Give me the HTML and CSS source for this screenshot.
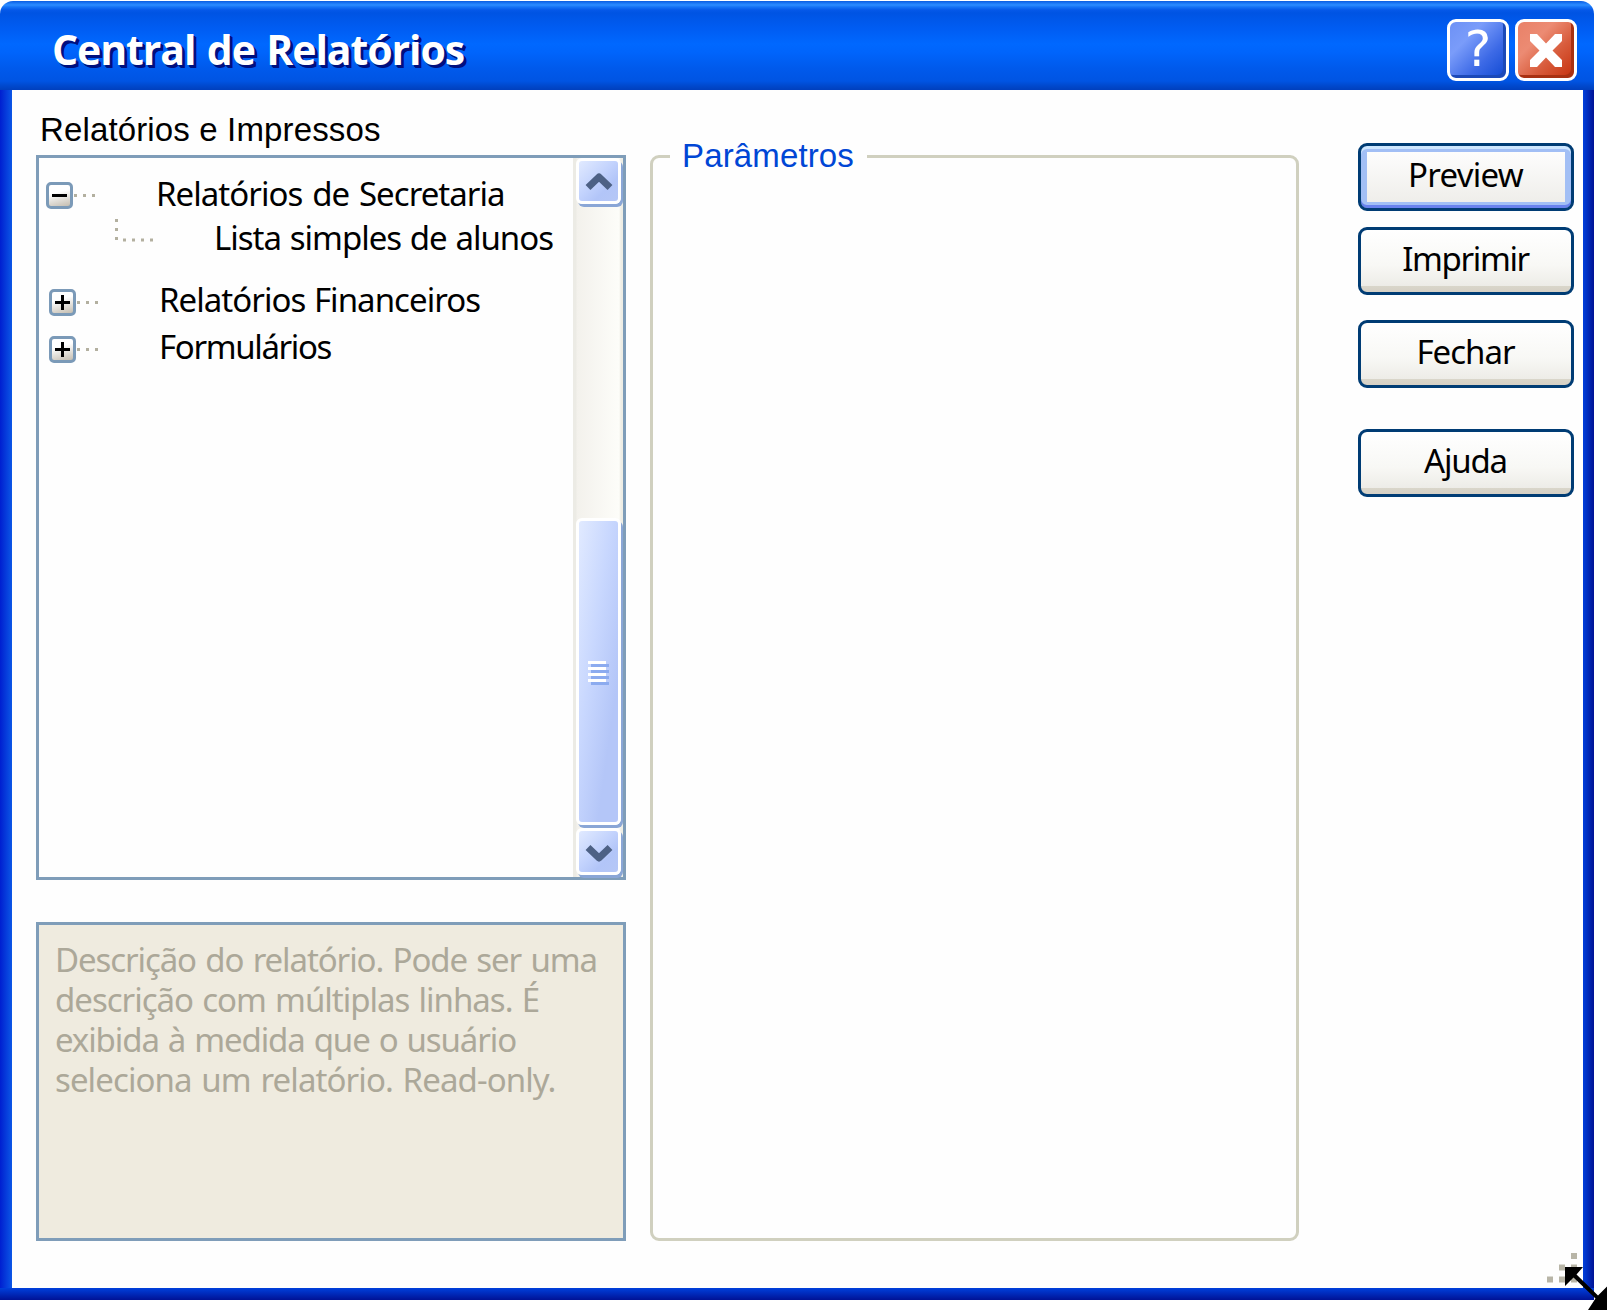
FILE: index.html
```html
<!DOCTYPE html>
<html lang="pt-BR">
<head>
<meta charset="utf-8">
<title>Central de Relatórios</title>
<link rel="stylesheet" href="styles.css">
</head>
<body>
<div class="window">
  <header class="titlebar">
    <h1 class="title">Central de Relatórios</h1>
    <button class="caption help" aria-label="Ajuda">?</button>
    <button class="caption close" aria-label="Fechar">
      <svg width="34" height="35" viewBox="0 0 34 35"><path d="M1 1H8L17 10.500L26 1H33V8L23.500 17.500L33 27V34H26L17 24.500L8 34H1V27L10.500 17.500L1 8Z" fill="#fff"/></svg>
    </button>
  </header>
  <main class="client">
    <section class="left">
      <div class="label"><span class="t-label">Relatórios e Impressos</span></div>
      <div class="treebox">
        <div class="tree">
          <div class="row first"><i class="toggle minus"></i><i class="dots"></i><span class="t1">Relatórios de Secretaria</span></div>
          <div class="row child"><svg class="elbow" width="38" height="23" viewBox="0 0 38 23" fill="#b3b0a0"><path d="M0 0h3v3h-3zM0 9h3v3h-3zM0 18h3v3h-3zM8 19.500h3v3h-3zM17 19.500h3v3h-3zM26 19.500h3v3h-3zM35 19.500h3v3h-3z"/></svg><span class="t2">Lista simples de alunos</span></div>
          <div class="row third"><i class="toggle plus"></i><i class="dots"></i><span class="t3">Relatórios Financeiros</span></div>
          <div class="row fourth"><i class="toggle plus"></i><i class="dots"></i><span class="t4">Formulários</span></div>
        </div>
        <div class="scrollbar">
          <div class="sb up"><svg width="28" height="19" viewBox="0 0 28 19"><path d="M3 15.500L14 5L25 15.500" fill="none" stroke="#4d6185" stroke-width="7" stroke-linejoin="round"/></svg></div>
          <div class="sb thumb"><svg width="21" height="24" viewBox="0 0 21 24"><path d="M0 1.500H18M0 7.500H18M0 13.500H18M0 19.500H18" stroke="#fff" stroke-width="3"/><path d="M3 4.500H21M3 10.500H21M3 16.500H21M3 22.500H21" stroke="#8cabef" stroke-width="3"/></svg></div>
          <div class="sb down"><svg width="28" height="19" viewBox="0 0 28 19"><path d="M3 3.500L14 14L25 3.500" fill="none" stroke="#4d6185" stroke-width="7" stroke-linejoin="round"/></svg></div>
        </div>
      </div>
      <div class="description">
        <span class="d1">Descrição do relatório. Pode ser uma</span><br>
        <span class="d2">descrição com múltiplas linhas. É</span><br>
        <span class="d3">exibida à medida que o usuário</span><br>
        <span class="d4">seleciona um relatório. Read-only.</span>
      </div>
    </section>
    <fieldset class="group"><legend><span class="t-legend">Parâmetros</span></legend></fieldset>
    <nav class="actions">
      <button class="btn default"><span class="b1">Preview</span></button>
      <button class="btn"><span class="b2">Imprimir</span></button>
      <button class="btn close-btn"><span class="b3">Fechar</span></button>
      <button class="btn help-btn"><span class="b4">Ajuda</span></button>
    </nav>
  </main>
</div>
<svg class="grip" width="60" height="57" viewBox="0 0 60 57">
  <path d="M24 0h6v6h-6zM12 11.500h6v6h-6zM24 11.500h6v6h-6zM0 23.500h6v6h-6zM12 23.500h6v6h-6zM24 23.500h6v6h-6z" fill="#b8b5a7"/>
  <path d="M18 14H36L29.500 21.500L51 42.500L60 33.500V57H41L48.500 45.500L26.500 24.500L18 33Z" fill="#000"/>
</svg>
</body>
</html>
```
FILE: styles.css
```css
* { box-sizing: border-box; }
html, body { margin: 0; width: 1607px; height: 1310px; overflow: hidden; background: #fff; }
body { position: relative; padding-top: 1px; font: 33px/40px "Noto Sans", "Open Sans", sans-serif; color: #000; }
span { white-space: nowrap; }
button { font: inherit; color: inherit; padding: 0; }

.window { width: 1594px; height: 1299px; display: flex; flex-direction: column; }
.titlebar {
  flex: none; height: 89px; display: flex; align-items: flex-start; gap: 6px; padding: 18px 17px 0 52px;
  border-radius: 13px 13px 0 0;
  background: linear-gradient(#0a5ce0 0, #1b76f4 2px, #2c8cff 4px, #1673f5 6px, #0558e8 9px, #0054e3 12px, #005cf2 27px, #0068ff 43px, #0064fb 52px, #005aec 67px, #0054e3 80px, #0048cc 85px, #003fbd 89px);
}
.title { margin: 0; flex: 1; color: #fff; font: 700 41px/61px "Open Sans", "Noto Sans", sans-serif; letter-spacing: -1.1px; word-spacing: 2px; text-shadow: 2px 2px 0 #00107f, 3px 3px 0 #00107f; white-space: nowrap; }
.caption { width: 62px; height: 62px; border: 3px solid #fff; border-radius: 9px; display: flex; align-items: center; justify-content: center; color: #fff; }
.help { background: linear-gradient(135deg, #6d91f5 0, #7a9cfa 30%, #3d6ae6 65%, #0f48d2 100%); box-shadow: inset -3px -3px 0 #1c49b8; font: 50px/50px "DejaVu Sans", sans-serif; padding-bottom: 2px; }
.close { background: linear-gradient(135deg, #e98168 0, #ec8b73 32%, #d85c3c 62%, #c52f0b 100%); box-shadow: inset -3px -3px 0 #a83112; }

.client {
  flex: 1; min-height: 0; display: grid; grid-template-columns: 590px 649px 216px; column-gap: 24px;
  border-style: solid; border-width: 0 11px 12px 12px; border-color: transparent;
  padding: 0 0 0 24px;
  background:
    linear-gradient(#fefefe, #fefefe) padding-box,
    linear-gradient(#0040dc, #001295) 0 100% / 100% 12px no-repeat border-box,
    linear-gradient(90deg, #001fd0, #0b57e6) 0 0 / 12px 100% no-repeat border-box,
    linear-gradient(90deg, #0040dc, #001295) 100% 0 / 11px 100% no-repeat border-box;
}
.left { display: flex; flex-direction: column; }
.label { height: 65px; padding: 19px 0 0 4px; }
.t-label, .t-legend { font: 33px/40px "Liberation Sans", Arial, sans-serif; letter-spacing: 0.14px; }
.treebox { height: 725px; border: 3px solid #7f9db9; display: flex; }
.tree { flex: 1; min-width: 0; }
.row { display: flex; align-items: center; height: 46px; }
.row span { margin-top: -4px; letter-spacing: -1px; }
.toggle { flex: none; width: 27px; height: 27px; border: 3px solid #7b9ab8; border-radius: 5px; background: linear-gradient(90deg, #000, #000) center / 15px 3px no-repeat, linear-gradient(165deg, #fff 35%, #c4bdb0); }
.plus { background: linear-gradient(#000, #000) center / 15px 3px no-repeat, linear-gradient(#000, #000) center / 3px 15px no-repeat, linear-gradient(165deg, #fff 35%, #c4bdb0); }
.dots { flex: none; width: 21px; height: 3px; margin-left: 1px; background: repeating-linear-gradient(90deg, #b3b0a0 0 3px, transparent 3px 9px); }
.first { margin-top: 14px; padding-left: 7px; }
.child { height: 42px; padding-left: 76px; }
.third { margin-top: 19px; padding-left: 10px; }
.fourth { margin-top: 1px; padding-left: 10px; }
.row .t1, .row .t3, .row .t4 { margin-left: 61px; }
.row .t1 { margin-top: -2px; letter-spacing: -0.95px; word-spacing: 2.1px; }
.row .t2 { margin: -2px 0 0 61px; word-spacing: 1.1px; }
.row .t3 { letter-spacing: -0.95px; word-spacing: 0.8px; }
.row .t4 { letter-spacing: -1.35px; }
.elbow { flex: none; margin-top: -17px; }

.scrollbar { width: 50px; padding: 0 3px; background: linear-gradient(90deg, #ecebe5 0 3px, #f3f1ec 4px, #fdfdf9 46px, #eeede5 48px 50px); display: flex; flex-direction: column; }
.sb { flex: none; width: 45px; border: 3px solid #fff; border-radius: 6px; background: linear-gradient(135deg, #e1eaff, #c3d3fd 45%, #b2c5f8 70%, #b5c7f6); box-shadow: 2px 3px 0 #8aa6d6; display: flex; align-items: center; justify-content: center; }
.up { height: 46px; }
.thumb { height: 307px; margin-top: 314px; padding-top: 2px; background: linear-gradient(98deg, #e1eaff, #c8d7fe 40%, #b4c6f8 75%); }
.down { height: 47px; margin-top: 3px; padding-top: 4px; }

.description { margin-top: 42px; height: 319px; border: 3px solid #7f9db9; background: #efebdf; color: #aca899; padding: 15px 0 0 16px; letter-spacing: -1.1px; }
.d1 { word-spacing: 1.9px; }
.d2 { letter-spacing: -1px; word-spacing: 1.6px; }
.d3 { word-spacing: 1.5px; }
.d4 { letter-spacing: -0.9px; word-spacing: 2px; }

.group { margin: 45px 0 0; height: 1106px; border: 3px solid #d0d0bf; border-radius: 9px; padding: 0; min-width: 0; }
.group legend { margin-left: 17px; padding: 0 12px; height: 42px; line-height: 40px; color: #0046d5; width: 197px; }

.actions { margin-left: 35px; padding-top: 53px; display: flex; flex-direction: column; align-items: flex-start; }
.btn { flex: none; width: 216px; height: 68px; border: 3px solid #003c74; border-radius: 9px; text-align: center; line-height: 56px; padding: 0 1px 4px 0; background: linear-gradient(#fff 0, #f8f8f5 35px, #edece7 56px, #d9d6ca 56px, #d6d0c5 62px); }
.default { background: linear-gradient(#fff, #edece8); box-shadow: inset 0 3px #cee7ff, inset 0 -3px #6982ee, inset 0 0 0 6px #a2bff5; }
.b1 { letter-spacing: -0.75px; }
.b2 { letter-spacing: -1.35px; }
.b3 { letter-spacing: -1px; }
.b4 { letter-spacing: -1.2px; }
.btn + .btn { margin-top: 16px; }
.btn.close-btn { margin-top: 25px; }
.btn.help-btn { margin-top: 41px; }
.grip { position: absolute; left: 1547px; top: 1253px; }
```
